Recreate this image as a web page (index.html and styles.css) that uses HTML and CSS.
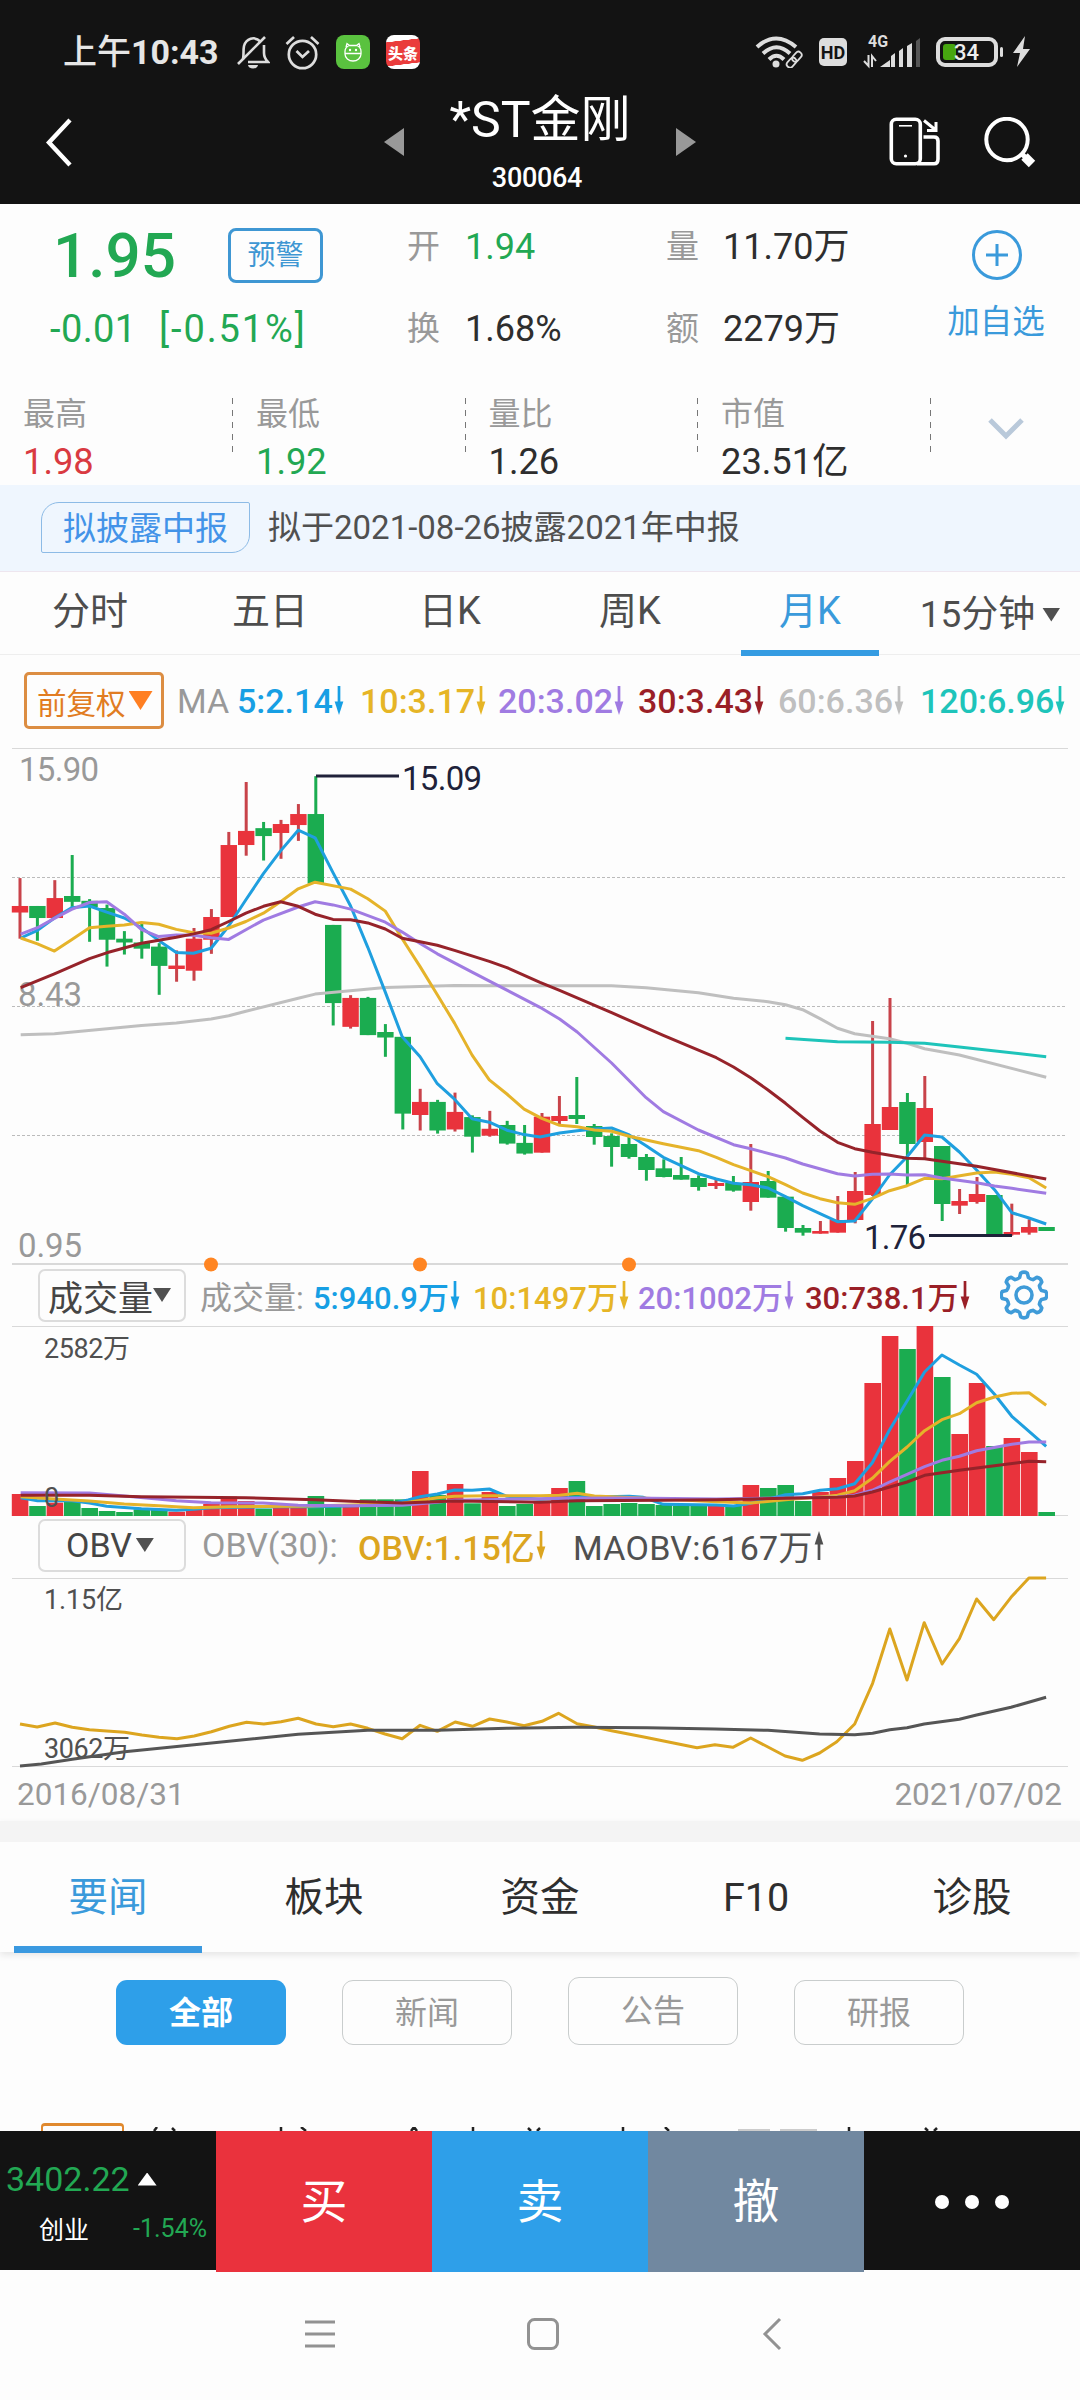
FILE: index.html
```html
<!DOCTYPE html>
<html lang="zh-CN">
<head>
<meta charset="utf-8">
<title>*ST金刚 300064</title>
<link rel="stylesheet" href="styles.css">
</head>
<body>
<svg class="defs" width="0" height="0">
  <symbol id="down" viewBox="0 0 10 30"><path d="M5 0V20" stroke="currentColor" stroke-width="2.800"/><path d="M0.500 16H9.500L5 30Z" fill="currentColor"/></symbol>
  <symbol id="up" viewBox="0 0 10 30"><path d="M5 30V10" stroke="currentColor" stroke-width="2.800"/><path d="M0.500 14H9.500L5 0Z" fill="currentColor"/></symbol>
</svg>
<div class="screen">
  <header class="top">
    <div class="status">
      <div class="status-left">
        <span class="clock">上午<b>10:43</b></span>
        <svg class="bell" width="34" height="34" viewBox="0 0 34 34" fill="none" stroke="#ddd" stroke-width="2.6"><path d="M7 24C8 20 7 16 8 11C10 4 18 0 25 7M28 10V18C28 23 30 25 32 27H12"/><path d="M2 29L29 2"/><path d="M12 30H22A5 3.500 0 0 1 12 30Z" fill="#ddd" stroke="none"/></svg>
        <svg class="alarm" width="35" height="35" viewBox="0 0 35 35" fill="none" stroke="#ddd" stroke-width="2.7"><circle cx="17.500" cy="19.500" r="13.700"/><path d="M11.500 16L17.500 22L24 16M1.500 9L9 2M33.500 9L26 2"/></svg>
        <svg class="app" width="34" height="34" viewBox="0 0 34 34"><rect width="34" height="34" rx="8" fill="#5ac23f"/><path d="M10 12L11 8.500L13.500 10.500H20.500L23 8.500L24 12M9 18.500H25V19A8 7 0 0 1 9 19V16.500Q9 12.500 12.500 11M25 18.500V16.500Q25 12.500 21.500 11" fill="none" stroke="#fff" stroke-width="1.300"/><circle cx="14" cy="15" r="1.200" fill="#fff"/><circle cx="20" cy="15" r="1.200" fill="#fff"/></svg>
        <span class="toutiao"><i>头条</i></span>
      </div>
      <div class="status-right">
        <svg width="48" height="32" viewBox="0 0 48 32" fill="none" stroke="#ddd" stroke-width="4"><path d="M2 11Q21 -6 41 11M8 17.500Q21.500 5 35 17.500M14 23.500Q21.500 16 29 23.500"/><circle cx="21" cy="28" r="3.500" fill="#ddd" stroke="none"/><g stroke="#131313" stroke-width="7"><path d="M35 29L45 18"/></g><g stroke-width="1.800" transform="rotate(-48 39 23.500)"><rect x="29.500" y="20.500" width="11" height="6.500" rx="3.200"/><rect x="37.500" y="20.500" width="11" height="6.500" rx="3.200"/></g></svg>
        <span class="hd">HD</span>
        <span class="cell"><em>4G</em><svg width="58" height="34" viewBox="0 0 58 34"><path d="M17 32H27V25ZM28 32V21L32 18V32ZM36 32V16L40 13V32ZM44 32V11L49 8V32Z" fill="#ddd"/><path d="M53 32V6L57 3V32Z" fill="#555"/><path d="M5.500 20V31L1 26M9 32V21L13 26" fill="none" stroke="#ddd" stroke-width="2"/></svg></span>
        <span class="battery"><i></i><b>34</b></span>
        <svg class="bolt" width="19" height="32" viewBox="0 0 19 32"><path d="M13 0L1 17H8L5 31L18 13H11Z" fill="#ddd"/></svg>
      </div>
    </div>
    <div class="titlebar">
      <svg class="back" width="29" height="49" viewBox="0 0 29 49"><path d="M26 2L5 24.500L26 47" fill="none" stroke="#fff" stroke-width="4.400"/></svg>
      <div class="stock">
        <svg width="20" height="28" viewBox="0 0 20 28"><path d="M20 0V28L0 14Z" fill="#999"/></svg>
        <div class="name"><h1>*ST金刚</h1><p>300064</p></div>
        <svg width="20" height="28" viewBox="0 0 20 28"><path d="M0 0V28L20 14Z" fill="#999"/></svg>
      </div>
      <div class="tools">
        <svg width="52" height="50" viewBox="0 0 52 50" fill="none" stroke="#fff" stroke-width="3.600"><rect x="2.300" y="2.300" width="29" height="44.500" rx="5"/><path d="M34.500 20H45Q49 20 49 24V42Q49 46.800 45 46.800H28"/><path d="M10 8.800H23" stroke-width="1.600"/><path d="M35 3.500L46 12.500M47 5V13.500H38" stroke-width="3"/><circle cx="16.500" cy="39" r="1.600" fill="#fff" stroke="none"/></svg>
        <svg width="52" height="52" viewBox="0 0 52 52" fill="none" stroke="#fff"><circle cx="23" cy="22.500" r="20.700" stroke-width="4"/><path d="M37 36L41 40" stroke-width="5"/><path d="M40.500 39.500L48 47" stroke-width="9"/></svg>
      </div>
    </div>
  </header>

  <section class="quote">
    <div class="quote-main">
      <div class="price">
        <div class="price-row"><strong>1.95</strong><button class="alert">预警</button></div>
        <div class="change"><span>-0.01</span><span class="pct">[-0.51%]</span></div>
      </div>
      <dl class="pairs">
        <dt>开</dt><dd class="green">1.94</dd><dt>量</dt><dd>11.70万</dd>
        <dt>换</dt><dd>1.68%</dd><dt>额</dt><dd>2279万</dd>
      </dl>
      <div class="add"><svg width="52" height="52" viewBox="0 0 52 52" fill="none" stroke="#3a9adb" stroke-width="3"><circle cx="26" cy="26" r="23.500"/><path d="M15 26H37M26 15V37"/></svg><span>加自选</span></div>
    </div>
    <div class="stats">
      <div><span>最高</span><b class="red">1.98</b></div>
      <div><span>最低</span><b class="green">1.92</b></div>
      <div><span>量比</span><b>1.26</b></div>
      <div><span>市值</span><b>23.51亿</b></div>
      <div class="more"><svg width="36" height="23" viewBox="0 0 36 23"><path d="M2 2L18 18L34 2" fill="none" stroke="#b9c9da" stroke-width="5"/></svg></div>
    </div>
  </section>

  <section class="notice"><span class="tag">拟披露中报</span><p>拟于2021-08-26披露2021年中报</p></section>

  <nav class="periods">
    <a>分时</a><a>五日</a><a>日K</a><a>周K</a><a class="on">月K</a><a class="menu">15分钟<i class="tri"></i></a>
  </nav>

  <section class="ma">
    <span class="adjust">前复权<i class="tri"></i></span>
    <span class="ma-label">MA</span>
    <span class="c5">5:2.14<svg><use href="#down"/></svg></span>
    <span class="c10">10:3.17<svg><use href="#down"/></svg></span>
    <span class="c20">20:3.02<svg><use href="#down"/></svg></span>
    <span class="c30">30:3.43<svg><use href="#down"/></svg></span>
    <span class="c60">60:6.36<svg><use href="#down"/></svg></span>
    <span class="c120">120:6.96<svg><use href="#down"/></svg></span>
  </section>

  <section class="charts">
    <svg class="plot" id="price" width="1080" height="526" viewBox="0 740 1080 526"></svg>
    <div class="ind vol">
      <span class="pick">成交量<i class="tri"></i></span>
      <span class="grey">成交量:</span>
      <span class="c5">5:940.9万<svg><use href="#down"/></svg></span>
      <span class="c10">10:1497万<svg><use href="#down"/></svg></span>
      <span class="c20">20:1002万<svg><use href="#down"/></svg></span>
      <span class="c30">30:738.1万<svg><use href="#down"/></svg></span>
      <svg class="gear" id="gear" width="48" height="50" viewBox="-24 -25 48 50"></svg>
    </div>
    <svg class="plot" id="volume" width="1080" height="192" viewBox="0 1326 1080 192"></svg>
    <div class="ind obv">
      <span class="pick">OBV<i class="tri"></i></span>
      <span class="grey">OBV(30):</span>
      <span class="gold">OBV:1.15亿<svg><use href="#down"/></svg></span>
      <span class="dark">MAOBV:6167万<svg><use href="#up"/></svg></span>
    </div>
    <svg class="plot" id="obv" width="1080" height="192" viewBox="0 1576 1080 192"></svg>
    <div class="dates"><span>2016/08/31</span><span>2021/07/02</span></div>
  </section>

  <nav class="sections"><a class="on">要闻</a><a>板块</a><a>资金</a><a>F10</a><a>诊股</a></nav>
  <section class="news">
    <div class="filters"><span class="on">全部</span><span>新闻</span><span class="tall">公告</span><span>研报</span></div>
    <div class="item"><i></i><svg width="820" height="4" viewBox="140 0 820 4"><path d="M157 0L154 4M172 1L175 4M281 0V4M301 0L306 4M411 4L414 0L417 4M473 0V4M528 1L531 4M540 1L537 4M623 0V4M665 0L669 4M849 0V4M925 1L928 4M937 1L934 4" stroke="#222" stroke-width="2.500" fill="none"/><path d="M738 3H770M780 3H817" stroke="#ccc" stroke-width="2"/></svg></div>
  </section>

  <footer class="trade">
    <div class="index"><p>3402.22<i></i></p><p class="sub"><span>创业</span><span>-1.54%</span></p></div>
    <a class="buy">买</a><a class="sell">卖</a><a class="cancel">撤</a>
    <div class="dots"><i></i><i></i><i></i></div>
  </footer>
  <div class="sysnav">
    <svg width="30" height="34" viewBox="0 0 30 34"><path d="M0 5H30M0 17H30M0 29H30" stroke="#929292" stroke-width="3"/></svg>
    <svg width="32" height="34" viewBox="0 0 32 34"><rect x="1.500" y="2.500" width="29" height="29" rx="6" fill="none" stroke="#929292" stroke-width="3"/></svg>
    <svg width="20" height="34" viewBox="0 0 20 34"><path d="M18 2L3 17L18 32" fill="none" stroke="#929292" stroke-width="3"/></svg>
  </div>
</div>
<script src="chart.js"></script>
</body>
</html>
```

FILE: styles.css
```css
* { box-sizing: border-box; }
body { margin: 0; background: #fdfdfd; color: #2e2e2e; font-family: Roboto, "Noto Sans CJK SC", sans-serif; }
p, h1, dl, dd { margin: 0; }
i, em { font-style: normal; }
svg { display: block; flex: none; }
.defs { position: absolute; }
.screen { width: 1080px; height: 2400px; overflow: hidden; display: flex; flex-direction: column; }
.screen > * { flex: none; }
.green { color: #22a853; }
.red { color: #d93a41; }
.c5 { color: #179fe4; }
.c10 { color: #e6b526; }
.c20 { color: #a07be2; }
.c30 { color: #9a1f27; }
.c60 { color: #bfbfbf; }
.c120 { color: #1ec4ba; }

.top { height: 204px; background: #131313; color: #fff; }
.status { height: 104px; padding: 0 49px 0 63px; display: flex; justify-content: space-between; align-items: center; }
.status-left, .status-right { display: flex; align-items: center; }
.clock { width: 173px; color: #e6e6e6; font-size: 34px; font-weight: 500; line-height: 40px; white-space: nowrap; }
.clock b { font-weight: 700; }
.alarm { margin-left: 15px; }
.app { margin: 0 16px; }
.toutiao { width: 34px; height: 34px; border-radius: 8px; background: linear-gradient(173deg, #fff 19%, #ea3c3c 20% 82%, #fff 83%); display: flex; align-items: center; justify-content: center; overflow: hidden; color: #fff; font-size: 15px; font-weight: 900; }
.hd { margin-left: 16px; width: 28px; height: 28px; border-radius: 5px; background: #ddd; color: #131313; font-size: 18px; font-weight: 700; line-height: 29px; text-align: center; }
.cell { position: relative; margin-left: 16px; }
.cell em { position: absolute; left: 5px; top: -3px; font-size: 16px; font-weight: 700; line-height: 20px; color: #ddd; }
.battery { position: relative; margin-left: 15px; width: 62px; height: 30px; border: 4px solid #ddd; border-radius: 9px; padding: 3px; }
.battery::after { content: ""; position: absolute; right: -9px; top: 6px; width: 3px; height: 10px; border-radius: 2px; background: #ddd; }
.battery i { display: block; width: 13px; height: 16px; border-radius: 3px; background: #47a610; }
.battery b { position: absolute; left: 14px; top: 1px; color: #eee; font-size: 22px; font-weight: 500; line-height: 22px; }
.bolt { margin-left: 14px; }
.titlebar { height: 100px; padding: 0 44px; display: grid; grid-template-columns: 300px 1fr 300px; align-items: center; }
.titlebar .back { margin-top: -24px; }
.stock { display: flex; justify-content: space-between; align-items: center; margin: 0 40px; height: 100px; }
.stock > svg { margin-top: -24px; }
.name { text-align: center; height: 100px; }
.name h1 { font-size: 50px; font-weight: 400; line-height: 60px; margin-top: -14px; white-space: nowrap; }
.name p { font-size: 27px; font-weight: 500; line-height: 30px; margin: 13px 6px 0 0; letter-spacing: -0.3px; }
.tools { display: flex; justify-content: flex-end; gap: 43px; margin-top: -23px; }

.quote { height: 281px; }
.quote-main { height: 179px; display: grid; grid-template-columns: 408px 520px 152px; }
.price { padding: 15px 0 0 50px; color: #22a853; }
.price-row { height: 72px; display: flex; align-items: center; }
.price strong { width: 175px; padding-left: 3px; font-size: 62px; font-weight: 500; margin-right: 3px; }
.alert { width: 95px; height: 55px; padding: 0; border: 3px solid #3f97d3; border-radius: 8px; background: none; color: #3f97d3; font: 28px/49px Roboto, "Noto Sans CJK SC", sans-serif; }
.change { display: flex; height: 75px; align-items: center; font-size: 38px; }
.change span { width: 109px; letter-spacing: 0.4px; }
.change .pct { width: auto; letter-spacing: 1.9px; }
.pairs { padding-top: 2px; display: grid; grid-template-columns: 57px 202px 56px 1fr; grid-template-rows: 82px 82px; line-height: 82px; font-size: 36px; white-space: nowrap; }
.pairs dt { font-size: 33px; color: #999; margin-left: -1px; }
.add { display: flex; flex-direction: column; align-items: center; padding: 25px 14px 0 0; color: #3a9adb; font-size: 32.500px; white-space: nowrap; }
.add span { margin-top: 17px; line-height: 48px; margin-left: -2px; }
.stats { height: 102px; display: grid; grid-template-columns: 233px 232.500px 232.500px 233px 1fr; }
.stats > div { padding: 7px 0 0 23px; background: repeating-linear-gradient(#777 0 6px, transparent 6px 12px) right 15px / 1px 54px no-repeat; }
.stats span { display: block; font-size: 32px; line-height: 48px; color: #999; }
.stats b { display: block; font-size: 36.300px; font-weight: 400; line-height: 48px; }
.stats .more { background: none; display: flex; justify-content: center; padding: 35px 0 0; }

.notice { height: 86px; background: #eff6fe; padding-left: 41px; display: flex; align-items: center; gap: 18px; }
.tag { width: 209px; height: 51px; border: 1px solid #8dbbe6; border-radius: 18px 2px 18px 2px; color: #4393e8; font-size: 33px; line-height: 51px; text-align: center; white-space: nowrap; margin-top: -2px; }
.notice p { font-size: 33px; line-height: 48px; color: #505050; white-space: nowrap; }
.periods { height: 84px; border-top: 1px solid #eee6ef; border-bottom: 1px solid #eee; display: grid; grid-template-columns: repeat(6, 180px); color: #4d4d4d; font-size: 38px; line-height: 78px; text-align: center; }
.periods .on { margin: 0 21px; color: #3a9adb; border-bottom: 6px solid #359ce2; margin-bottom: 1px; }
.periods .menu { display: flex; align-items: center; justify-content: center; gap: 7px; font-size: 37px; line-height: 84px; }
.tri { display: inline-block; width: 18px; height: 14px; background: #505050; clip-path: polygon(0 0, 100% 0, 50% 100%); flex: none; }

.ma { height: 85px; padding: 6px 0 0 24px; display: grid; grid-template-columns: 153px 60px 123px 138px 140px 140px 142px 1fr; align-items: center; font-size: 34px; font-weight: 500; white-space: nowrap; }
.ma > span, .ind > span { display: flex; align-items: center; }
.ma svg, .ind span svg { width: 10px; height: 29px; margin-left: 1px; }
.ma .adjust { width: 140px; height: 57px; border: 3px solid #dc8d42; border-radius: 5px; color: #e17c22; font-size: 29.500px; font-weight: 400; padding-left: 10px; }
.adjust .tri { width: 24px; height: 19px; margin-left: 3px; background: #ff7f22; }
.ma-label { color: #999; font-weight: 400; }
.charts { height: 1081px; }
.plot { overflow: visible; }
.plot text { font-family: Roboto, "Noto Sans CJK SC", sans-serif; }
.ind { height: 60px; padding: 0 0 2px 38px; display: grid; align-items: center; font-size: 31px; white-space: nowrap; }
.vol { grid-template-columns: 162px 113px 160px 165px 167px 195px 48px; font-weight: 500; }
.obv { height: 58px; padding-bottom: 4px; grid-template-columns: 164px 156px 215px 1fr; font-size: 34px; }
.ind .pick { width: 148px; height: 53px; border: 2px solid #dcdcdc; border-radius: 7px; padding-left: 8px; font-size: 35px; font-weight: 400; color: #454545; }
.obv .pick { padding-left: 26px; font-size: 34px; }
.obv .pick .tri { margin-left: 4px; }
.ind .grey { color: #999; font-weight: 400; }
.vol .grey { font-size: 32px; }
.gold { color: #dca51f; font-weight: 500; }
.dark { color: #505050; letter-spacing: 0.3px; }
.dates { height: 53px; padding: 0 18px 0 17px; display: flex; justify-content: space-between; font-size: 31.500px; line-height: 54px; color: #999; }

.sections { border-top: 21px solid #f4f4f4; height: 131px; display: grid; grid-template-columns: repeat(5, 216px); font-size: 39.500px; line-height: 111px; text-align: center; box-shadow: 0 3px 7px #e5e5e5; }
.sections .on { position: relative; color: #3a9adb; }
.sections .on::after { content: ""; position: absolute; left: 14px; bottom: 0; width: 188px; height: 7px; background: #3a99e0; }
.news { height: 179px; }
.filters { height: 171px; padding: 28px 116px 0; display: flex; justify-content: space-between; align-items: flex-start; font-size: 32px; line-height: 64px; text-align: center; color: #999; }
.filters span { width: 170px; height: 65px; border: 1px solid #c9cdcd; border-radius: 11px; }
.filters .on { background: #2e9fe9; border: none; color: #fff; font-weight: 700; line-height: 66px; }
.filters .tall { height: 68px; margin-top: -3px; line-height: 66px; }
.item { height: 8px; overflow: hidden; padding-left: 41px; display: flex; align-items: flex-end; gap: 16px; }
.item i { width: 83px; height: 8px; border: 3px solid #e0892e; border-width: 3px 2px 0; border-radius: 4px 4px 0 0; }

.trade { height: 139px; display: grid; grid-template-columns: repeat(5, 216px); background: #131313; color: #fff; }
.trade a { font-size: 47px; line-height: 141px; text-align: center; }
.buy { background: #ea323d; }
.sell { background: #2e9fe9; }
.cancel { background: #7188a0; }
.index { padding: 26px 0 0 6px; }
.index p { display: flex; align-items: center; gap: 8px; height: 44px; font-size: 34px; color: #22a853; }
.index p i { width: 19px; height: 13px; background: #fff; clip-path: polygon(50% 0, 100% 100%, 0 100%); }
.index .sub { margin-top: 5px; padding: 0 9px 0 33px; justify-content: space-between; font-size: 25px; }
.sub span:first-child { color: #fff; }
.dots { display: flex; justify-content: center; align-items: center; gap: 16px; }
.dots i { width: 14px; height: 14px; border-radius: 50%; background: #fff; }
.sysnav { height: 130px; display: grid; grid-template-columns: 222px 235px 20px; padding: 0 0 2px 305px; align-items: center; }
```

FILE: chart.js
```js
const NS = 'http://www.w3.org/2000/svg';
const RED = '#e9333c', GREEN = '#1bac50', WICK_RED = '#c8434a';
const MA = { 5: '#1f9fdf', 10: '#e5b32a', 20: '#a07be2', 30: '#96232a', 60: '#bfbfbf', 120: '#1ec4ba' };

function el(parent, name, attrs, text) {
  const node = document.createElementNS(NS, name);
  for (const key in attrs) node.setAttribute(key, attrs[key]);
  if (text) node.textContent = text;
  parent.appendChild(node);
}
function hline(svg, y, dashed, width) {
  el(svg, 'path', { d: `M12 ${y}H${dashed ? 1066 : 1068}`, stroke: dashed ? '#bbb' : '#d9d9d9', 'stroke-width': width || 1, 'stroke-dasharray': dashed ? '3 2' : 'none' });
}
function label(svg, x, y, size, width, fill, text) {
  el(svg, 'text', { x, y, 'font-size': size, textLength: width, fill }, text);
}
const K = 2.904;
const at = (x0, y0, ky) => s => s.trim().split(/\s+/).map(p => {
  const [x, y] = p.split(',').map(Number);
  return (x0 + x / K).toFixed(1) + ',' + (y0 + y / ky).toFixed(1);
}).join(' ');
function line(svg, points, stroke, width) {
  el(svg, 'polyline', { points, fill: 'none', stroke, 'stroke-width': width || 3, 'stroke-linejoin': 'round' });
}
const xs = i => 20 + 17.4 * i;

/* direction, high, low, body top, body bottom */
const early = `R 401 577 482 501,G 482 583 482 517,R 407 517 459 517,G 334 490 453 470,G 462 586 467 485,G 478 658 488 580,G 555 623 577 588,G 532 635 588 606,G 590 740 600 656,R 611 702 655 665,R 546 699 577 670,R 491 621 514 580,R 267 514 305 514,R 122 336 264 305,G 238 350 256 279,R 232 345 244 270,R 186 293 215 247,G 105 417 215 417,G 537 829 537 764,R 741 838 749 833,G 746 857 749 857,G 825 920 848 864,G 862 1131 862 1085,R 1013 1134 1051 1089,G 1045 1143 1051 1134,R 1024 1137 1080 1131,G 1090 1198 1095 1152,R 1077 1152 1129 1149,G 1106 1175 1118 1172,G 1118 1204 1170 1201`;
const late = `R 519 638 530 638,R 468 552 528 543,G 411 552 525 537,G 552 614 558 591,G 580 680 588 621,G 590 656 612 651,G 642 722 651 690,G 658 712 685 711,G 651 719 705 719,G 706 752 714 741,R 720 747 729 738,G 708 755 729 752,R 612 812 726 786,G 693 773 723 773,G 770 875 770 864,G 855 887 864 878,R 843 881 873 881,R 768 878 840 878,R 696 850 753 840,R 243 768 552 765,R 174 570 501 570,G 459 735 486 612,R 408 660 504 606,G 618 843 618 792,R 747 822 783 797,R 711 791 762 786,G 765 886 765 886,R 791 887 876 884,R 838 884 861 878,G 861 873 861 873`;
const parse = (s, y0, k) => s.split(',').map(r => {
  const [dir, ...v] = r.trim().split(' ');
  return [dir, ...v.map(n => y0 + n / k)];
});
const candles = [...parse(early, 740, K), ...parse(late, 940, 3)];

const price = document.getElementById('price');
hline(price, 748.5); [877.5, 1006.5, 1135.5].forEach(y => hline(price, y, true)); hline(price, 1264, false, 2);
label(price, 19, 781, 33, 80, '#999', '15.90');
label(price, 18, 1006, 33, 64, '#999', '8.43');
label(price, 18, 1257, 33, 64, '#999', '0.95');
candles.forEach(([dir, hi, lo, top, bottom], i) => {
  const x = xs(i);
  el(price, 'rect', { x: x - 1.5, y: hi, width: 3, height: lo - hi, fill: dir === 'R' ? WICK_RED : GREEN });
  el(price, 'rect', { x: x - 8.2, y: top, width: 16.4, height: bottom - top, fill: dir === 'R' ? RED : GREEN });
});
const A = at(0, 740, K), B = at(540, 940, 3);
line(price, A('60,856 158,853 411,829 512,822 613,810 664,801 714,788 866,750 915,738 1119,719 1320,713') + ' ' + B('0,137 208,137 308,143 460,158 562,175 662,185 713,194 763,209 813,236 864,265 914,281 1015,296 1066,310 1117,326 1218,345 1470,412'), MA[60]);
line(price, B('713,295 864,305 1015,307 1117,310 1218,321 1470,350'), MA[120]);
line(price, A('60,575 109,553 158,517 208,487 260,482 310,500 361,517 411,545 461,582 512,617 562,619 613,605 664,540 714,464 765,388 815,322 866,262 915,284 967,385 1018,482 1068,602 1119,732 1168,862 1220,920 1270,998 1320,1043 1371,1100 1421,1110 1472,1133 1522,1146') + ' ' + B('0,591 57,579 108,572 158,567 208,564 259,585 308,617 358,652 460,701 512,717 562,730 612,734 662,744 713,770 763,797 813,821 864,845 914,843 965,777 1015,705 1066,650 1117,585 1167,591 1218,636 1268,690 1320,749 1370,818 1420,834 1470,852'), MA[5]);
line(price, A('60,575 109,592 158,613 208,580 260,545 310,541 361,537 411,530 461,535 512,550 562,560 613,561 664,546 714,527 765,503 815,470 866,432 915,413 1018,433 1068,461 1119,497 1168,577 1220,658 1270,740 1320,822 1371,915 1421,987 1472,1028 1522,1072') + ' ' + B('5,535 57,556 108,560 158,570 208,574 259,589 358,611 460,632 512,652 562,674 612,692 662,710 713,734 763,759 813,776 864,788 914,793 965,775 1015,752 1066,737 1117,715 1167,716 1268,699 1320,696 1370,703 1420,713 1470,744'), MA[10]);
line(price, A('60,564 109,545 158,518 208,492 260,472 310,470 361,506 411,551 461,571 512,566 562,567 613,574 664,579 714,551 765,523 866,485 915,470 967,479 1018,491 1119,529 1168,558 1220,591 1270,621 1371,674') + ' ' + B('0,202 57,237 108,276 208,369 308,473 358,515 460,570 562,614 612,626 713,654 763,672 864,701 914,708 965,703 1015,702 1066,705 1117,704 1167,714 1268,728 1320,738 1370,745 1470,760'), MA[20]);
line(price, A('60,719 158,679 260,635 310,618 411,590 512,573 562,563 613,551 664,527 714,503 765,483 815,470 866,483 915,506 967,521 1018,522 1068,531 1119,549 1168,576 1220,586 1270,596 1320,611 1421,643 1472,661') + ' ' + B('0,127 57,151 208,218 358,286 512,353 562,381 612,413 662,450 713,490 763,532 813,573 864,607 914,626 965,637 1066,655 1117,656 1268,679 1470,717'), MA[30]);
el(price, 'path', { d: 'M316 776H399M929 1235.500H1012', stroke: '#20223a', 'stroke-width': 2.8 });
label(price, 402, 790, 33, 80, '#20223a', '15.09');
label(price, 864, 1249, 33, 62, '#20223a', '1.76');
[211, 420, 629].forEach(cx => el(price, 'circle', { cx, cy: 1264.5, r: 7, fill: '#ff8522' }));

const volume = document.getElementById('volume');
const tops = [762, 798, 788, 783, 804, 813, 816, 808, 810, 815, 805, 792, 770, 783, 806, 800, 803, 768, 800, 800, 778, 778, 778, 693, 765, 732, 790, 756, 798, 792, 788, 744, 723, 798, 792, 789, 792, 795, 797, 798, 798, 798, 735, 744, 735, 783, 756, 714, 663, 429, 288, 327, 258, 411, 582, 429, 618, 594, 636, 816];
hline(volume, 1326.5); hline(volume, 1515.5);
tops.forEach((t, i) => el(volume, 'rect', { x: xs(i) - 8.2, y: 1240 + t / 3, width: 16.6, height: (828 - t) / 3, fill: candles[i][0] === 'R' ? RED : GREEN }));
const C = at(0, 1240, 3), D = at(540, 1240, 3);
line(volume, C('60,773 109,782 208,782 260,789 310,799 411,806 512,811 562,808 613,803 815,800 915,800 1119,795 1185,780 1220,770 1270,762 1320,750 1371,751 1421,747 1472,769') + ' ' + D('0,778 108,772 259,769 300,772 358,793 512,795 562,798 600,792 662,778 713,764 763,761 813,751 864,746 914,731 965,668 1015,570 1066,483 1117,396 1167,345 1218,375 1268,403 1320,463 1370,529 1470,619'), MA[5]);
line(volume, C('60,770 158,777 260,783 361,792 461,797 562,803 664,800 866,799 1018,795 1168,790 1270,773 1320,769 1421,767') + ' ' + D('0,767 57,766 108,760 158,768 358,777 512,785 612,789 713,779 813,771 864,766 914,752 965,715 1015,665 1066,621 1117,572 1167,539 1218,521 1268,488 1320,471 1370,460 1420,458 1470,496'), MA[10]);
line(volume, C('60,758 260,759 361,768 512,782 613,788 764,789 866,796 1018,797 1168,796 1270,787 1320,781') + ' ' + D('0,776 57,775 259,774 512,777 713,774 864,771 914,766 965,751 1015,726 1117,680 1167,661 1218,649 1268,632 1370,613 1420,606 1470,606'), MA[20]);
line(volume, C('60,766 260,766 411,770 714,773 915,779 1018,784 1168,789 1320,783') + ' ' + D('0,787 108,782 358,781 512,779 713,775 864,772 914,768 965,756 1066,726 1117,706 1218,691 1320,677 1420,664 1470,665'), MA[30]);
label(volume, 44, 1358, 27, 86, '#505050', '2582万');
label(volume, 44, 1507, 27, 15, '#505050', '0');

const obv = document.getElementById('obv');
hline(obv, 1578.5); hline(obv, 1766.5);
label(obv, 44, 1609, 27, 79, '#505050', '1.15亿');
label(obv, 44, 1758, 27, 86, '#505050', '3062万');
const E = s => s.split(' ').map(p => { const [x, y] = p.split(','); return (x / 1.452).toFixed(1) + ',' + (1510 + y / 3).toFixed(1); }).join(' ');
line(obv, E('29,642 54,651 80,639 105,652 130,659 155,663 181,667 206,675 231,682 257,686 282,678 307,665 333,649 358,637 383,642 408,635 433,625 459,642 484,650 509,642 534,655 559,672 584,686 610,646 635,664 661,636 686,649 711,627 736,636 761,647 787,634 811,610 838,641 863,651 888,662 935,681 1012,713 1038,704 1064,712 1090,684 1140,738 1165,751 1190,729 1215,695 1241,642 1267,520 1292,357 1317,510 1342,338 1368,462 1393,386 1418,267 1443,329 1468,262 1494,204 1519,204'), '#dca51f');
line(obv, E('29,768 60,762 105,748 181,725 282,704 433,673 534,661 635,661 736,655 838,652 940,653 1038,657 1115,661 1190,672 1241,674 1267,670 1292,659 1317,653 1342,642 1393,628 1418,615 1468,592 1519,562'), '#555');

/* settings gear: eight rounded teeth around a ring */
const gear = document.getElementById('gear');
let d = '';
for (let i = 0; i < 8; i++) {
  const p = (r, deg) => { const a = (i * 45 + deg - 90) * Math.PI / 180; return (r * Math.cos(a)).toFixed(1) + ' ' + (r * Math.sin(a)).toFixed(1); };
  d += `${i ? 'L' : 'M'}${p(18, -14)}L${p(22, -9)}Q${p(24, 0)} ${p(22, 9)}L${p(18, 14)}Q${p(17, 22.5)} ${p(18, 31)}`;
}
el(gear, 'path', { d: d + 'Z', fill: 'none', stroke: '#3f9bd8', 'stroke-width': 3.6, 'stroke-linejoin': 'round' });
el(gear, 'circle', { r: 8, fill: 'none', stroke: '#3f9bd8', 'stroke-width': 3.6 });
```
